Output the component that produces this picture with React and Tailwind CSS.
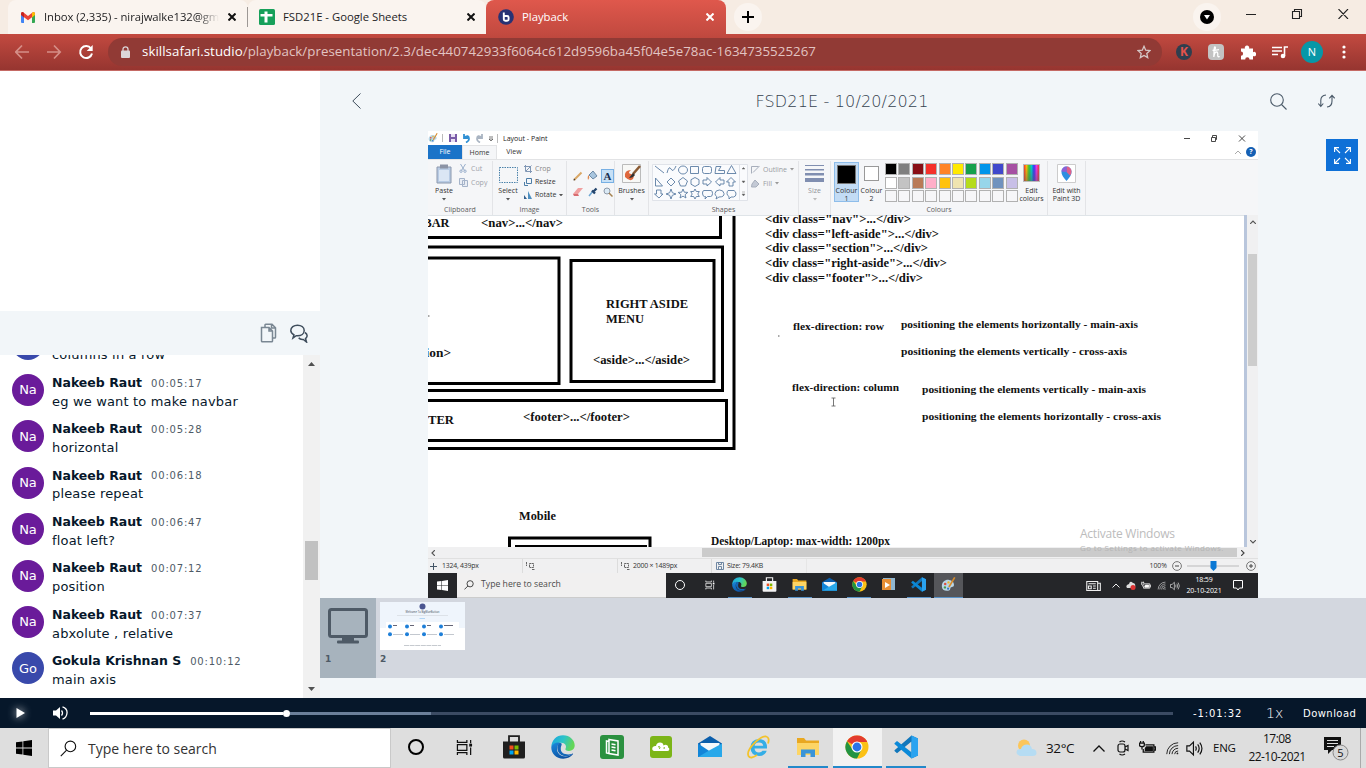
import React from "react";

const sans = "font-['Open_Sans','Noto_Sans',sans-serif]";
const verdana = "font-['DejaVu_Sans',sans-serif]";

const X = ({ c = "#111", s = 8, w = 2 }) => (
  <svg width={s} height={s} viewBox="0 0 8 8" className="shrink-0">
    <path d="M0.5 0.5L7.5 7.5M7.5 0.5L0.5 7.5" stroke={c} strokeWidth={w} />
  </svg>
);

const Edge = ({ s = 24 }) => (
  <svg width={s} height={s} viewBox="0 0 24 24">
    <defs>
      <linearGradient id="edgeTop" x1="0" y1="0" x2="1" y2="0.3">
        <stop offset="0" stopColor="#1ba5e0" /><stop offset="0.55" stopColor="#2cc3c8" /><stop offset="1" stopColor="#63d657" />
      </linearGradient>
      <linearGradient id="edgeLow" x1="0" y1="0" x2="0.6" y2="1">
        <stop offset="0" stopColor="#1a8ade" /><stop offset="1" stopColor="#0c4fa0" />
      </linearGradient>
    </defs>
    <path d="M0.3 12C0.6 5 5.5 0.3 12 0.3c7 0 11.7 5 11.7 10 0 3.600-2.700 5.700-5.700 5.700-2.600 0-4.200-1-3.500-2.200 1.500-2.600-.2-6-4.500-6-4.500 0-8.600 2-9.700 4.200z" fill="url(#edgeTop)" />
    <path d="M0.3 12c1-3.200 5-5 8.500-4.300C6.800 9.500 6 11.500 6 14c0 4.500 4 7.500 8.500 7.500 2.500 0 5.500-1.300 6.800-2.800.6-.6 1 0 .6.600C20 22 16.500 23.700 12.200 23.700 5.200 23.700 0 18.500.3 12z" fill="url(#edgeLow)" />
    <path d="M8.800 7.700C5 9.500 5 19 13 21c3.500.8 7-.5 8.300-2.300-4 1.500-12.300 1-11.500-6 .2-1.800 1.200-2.600.8-4.300z" fill="#1567b8" />
  </svg>
);

const Chrome = ({ s = 24 }) => (
  <svg width={s} height={s} viewBox="0 0 24 24">
    <circle cx="12" cy="12" r="11.500" fill="#fbc116" />
    <path d="M12 12L2 6.200A11.500 11.500 0 0 1 22 6.200L22 7H12z" fill="#e33b2e" />
    <path d="M2 6.200A11.500 11.500 0 0 0 12 23.500L16.500 14.500 7.500 14.500z" fill="#229342" />
    <circle cx="12" cy="12" r="5.500" fill="#fff" />
    <circle cx="12" cy="12" r="4.400" fill="#2a74e8" />
  </svg>
);

const VSCode = ({ s = 24 }) => (
  <svg width={s} height={s} viewBox="0 0 24 24">
    <path d="M17.500 0.500L24 3.500V20.500L17.500 23.500L17.500 6.500L3 18.200L0.500 16V15.200z" fill="#1177bb" />
    <path d="M0.500 8.200L3 6L17.500 17.200V23.500L0.500 9z" fill="#0a89d8" />
    <path d="M17.500 0.500L24 3.500V20.500L17.500 23.500z" fill="#2aa3f0" />
  </svg>
);

const Folder = ({ s = 24 }) => (
  <svg width={s} height={s} viewBox="0 0 24 24">
    <path d="M1 3h7l2 2.500h13V20H1z" fill="#e9a820" />
    <path d="M1 8h22v12H1z" fill="#fdd565" />
    <path d="M5 22v-7.500h14V22h-4.500v-3.500h-5V22z" fill="#3a94d8" />
  </svg>
);

const Mail = ({ s = 24 }) => (
  <svg width={s} height={s} viewBox="0 0 24 24">
    <path d="M0 8.500L12 1l12 7.500V22H0z" fill="#0b5eab" />
    <path d="M2.500 8h19v7L12 19 2.500 15z" fill="#f4f8fb" />
    <path d="M0 8.500L12 16.500 0 22z" fill="#1285d8" />
    <path d="M24 8.500V22H0L12 15z" fill="#28a8ea" />
  </svg>
);

const Store = ({ s = 24, bag = "#1f1f1f" }) => (
  <svg width={s} height={s} viewBox="0 0 24 24">
    <path d="M7 8V1.200h10V8" fill="none" stroke={bag} strokeWidth="1.800" />
    <path d="M1 6.500h22V22q0 1.500-1.500 1.500h-19Q1 23.500 1 22z" fill={bag} />
    <path d="M7.500 10.500h4v4h-4z" fill="#f04e1f" /><path d="M12.500 10.500h4v4h-4z" fill="#7fba00" />
    <path d="M7.500 15.500h4v4h-4z" fill="#00a4ef" /><path d="M12.500 15.500h4v4h-4z" fill="#ffb900" />
  </svg>
);

const Windows = ({ s = 16, c = "#000" }) => (
  <svg width={s} height={s} viewBox="0 0 16 16">
    <path d="M0 2.300L6.500 1.400V7.500H0zM7.300 1.300L16 0V7.500H7.300zM0 8.400H6.500V14.600L0 13.700zM7.300 8.400H16V16L7.300 14.700z" fill={c} />
  </svg>
);

const Search = ({ s = 18, c = "#111", w = 1.200 }) => (
  <svg width={s} height={s} viewBox="0 0 18 18" fill="none" stroke={c} strokeWidth={w}>
    <circle cx="11" cy="6.800" r="5.600" /><path d="M7 10.800L0.800 17" />
  </svg>
);

const TaskView = ({ s = 18, c = "#111" }) => (
  <svg width={s} height={s} viewBox="0 0 18 18" fill="none" stroke={c} strokeWidth="1.300">
    <path d="M1.500 1v2.500h10V1M1.500 17v-2.500h10V17M1.500 6h10v6h-10zM15.500 1v3.500M15.500 9v8" />
    <path d="M14 5h3v3h-3z" fill={c} stroke="none" />
  </svg>
);

const Wifi = ({ s = 16, c = "#222" }) => (
  <svg width={s} height={s} viewBox="0 0 16 16" fill="none" stroke={c} strokeWidth="1.100">
    <path d="M2 15A13 13 0 0 1 15 2M5 15A10 10 0 0 1 15 5.200M8 15A7 7 0 0 1 15 8.300M11 15a4 4 0 0 1 4-3.600" />
    <circle cx="14.200" cy="14.200" r="1" fill={c} stroke="none" />
  </svg>
);

const Speaker = ({ s = 16, c = "#111" }) => (
  <svg width={s} height={s} viewBox="0 0 16 16" fill="none" stroke={c} strokeWidth="1.100">
    <path d="M0.800 5.500h2.500L7 2v12l-3.700-3.500H0.800z" />
    <path d="M9 6q1.300 2 0 4M11 4.200q2.800 3.800 0 7.600M13 2.500q4 5.500 0 11" />
  </svg>
);

const Battery = ({ w = 16, c = "#111" }) => (
  <svg width={w} height={w} viewBox="0 0 16 16" fill="none" stroke={c} strokeWidth="1.200">
    <path d="M6 4.500h8v7H4V8.500M14.500 6.500h1v3h-1" /><path d="M7 6.500h5.500v3.500H6V8z" fill={c} />
    <path d="M1.500 1v2M4 1v2M0.500 3h4.500v2q0 1.300-2.200 1.300T0.500 5zM2.800 6.500V9" />
  </svg>
);

const Palette = ({ s = 18 }) => (
  <svg width={s} height={s} viewBox="0 0 18 18">
    <path d="M1 11c0-5 4-8 8.500-7.500 4 .5 6.500 3 6 6.500-.4 2.600-3 1.500-4 3-.8 1.500.2 3-3 3.500C4 17 1 15 1 11z" fill="#b9d6e8" />
    <circle cx="5" cy="8.500" r="1.500" fill="#e0503c" /><circle cx="9" cy="6.500" r="1.400" fill="#efb62c" />
    <circle cx="4.700" cy="12.500" r="1.400" fill="#4c9a4c" /><circle cx="8.500" cy="14" r="1.300" fill="#3678c4" />
    <path d="M16.500 0.500L9.500 12" stroke="#d88b2a" strokeWidth="2" />
  </svg>
);

function TabStrip() {
  return (
    <div className={`flex h-[34px] shrink-0 bg-[#f6ece3] ${sans} text-[11.300px] text-[#1d1d1f]`}>
      <div className="w-2" />
      <div className="flex w-[240px] items-center rounded-t-lg bg-[#faf4ef] pl-[13px]">
        <svg width="14" height="11" viewBox="0 0 14 11">
          <path d="M0 1.500V10q0 1 1 1h2V4.500z" fill="#4285f4" /><path d="M14 1.500V10q0 1-1 1h-2V4.500z" fill="#34a853" />
          <path d="M0 1.500Q.8-.6 2.500.400L7 4l4.500-3.600Q13.200-.6 14 1.500L11 5.200 7 8.200 3 5.200z" fill="#ea4335" />
          <path d="M11 1l.5-.6Q13.200-.6 14 1.500V3l-3 2.400z" fill="#fbbc04" /><path d="M0 1.500Q.8-.6 2.500.400L3 1v4.400L0 3z" fill="#c5221f" />
        </svg>
        <div className="ml-[9px] w-[175px] overflow-hidden whitespace-nowrap tracking-[-0.006em] [mask-image:linear-gradient(to_right,black_88%,transparent)]">Inbox (2,335) - nirajwalke132@gmail.com</div>
        <div className="ml-[9px]"><X /></div>
      </div>
      <div className="flex w-[238px] items-center rounded-t-lg bg-[#faf4ef]">
        <div className="-ml-px h-5 w-px bg-[#9d9895]" />
        <svg className="ml-[11px]" width="16" height="16" viewBox="0 0 16 16">
          <rect width="16" height="16" rx="1.500" fill="#17a05a" /><path d="M1.500 5H5.500V2.500H8.500V5H13.500V7.500H8.500V13.500H5.500V7.500H1.500z" fill="#fff" />
        </svg>
        <div className="ml-[8px] w-[184px]">FSD21E - Google Sheets</div>
        <X />
      </div>
      <div className="flex w-[240px] items-center rounded-t-lg bg-gradient-to-b from-[#df584c] to-[#c34a40] pl-[12px] text-white">
        <svg width="16" height="16" viewBox="0 0 16 16">
          <circle cx="8" cy="8" r="7.800" fill="#283274" />
          <path d="M5.800 3.500v6.700q0 1.500 1.500 1.500h1.800q1.500 0 1.500-1.500V8.500Q10.600 7 9.100 7H6" fill="none" stroke="#fff" strokeWidth="1.900" />
        </svg>
        <div className="ml-[8px] w-[184px]">Playback</div>
        <X c="#fff" />
      </div>
      <div className="ml-[8px] mt-[3px] grid h-7 w-7 place-items-center rounded-full bg-[#faf4ef]">
        <svg width="12" height="12" viewBox="0 0 12 12"><path d="M6 0V12M0 6H12" stroke="#000" strokeWidth="2" /></svg>
      </div>
      <div className="flex-1" />
      <div className="mt-[3px] grid h-7 w-7 place-items-center rounded-full bg-[#faf4ef]">
        <svg width="14" height="14" viewBox="0 0 14 14"><circle cx="7" cy="7" r="7" fill="#000" /><path d="M4 5h6L7 9.500z" fill="#fff" /></svg>
      </div>
      <svg className="ml-[25px] mt-[9px]" width="104" height="10" viewBox="0 0 104 10" fill="none" stroke="#222" strokeWidth="1.100">
        <path d="M0 5.500H10M46.500 2.500h7v7h-7zM48.500 2.500V.500h7v7h-2M92.500 0l9.500 10M102 0l-9.500 10" />
      </svg>
      <div className="w-[16px]" />
    </div>
  );
}

function Toolbar() {
  return (
    <div className={`flex h-[37px] shrink-0 items-center border-b border-[#c56a65] bg-gradient-to-b from-[#c34a40] to-[#963530] ${sans}`}>
      <svg className="ml-[15px] shrink-0" width="79" height="16" viewBox="0 0 79 16" fill="none">
        <path d="M14 8H1M7 1.500L.800 8 7 14.500" stroke="#d58f88" strokeWidth="1.700" />
        <path d="M32 8H45M39 1.500L45.200 8 39 14.500" stroke="#d58f88" strokeWidth="1.700" />
        <path d="M76 4.500A6 6 0 1 0 77 9.500" stroke="#fff" strokeWidth="2" /><path d="M77.700 1v6h-6z" fill="#fff" />
      </svg>
      <div className="ml-[14px] flex h-7 w-[1054px] items-center rounded-full bg-[#913a35]">
        <svg className="ml-[13px]" width="9" height="12" viewBox="0 0 9 12">
          <path d="M2 5V3.300a2.500 2.500 0 0 1 5 0V5" fill="none" stroke="#dcd6d8" strokeWidth="1.300" /><rect y="4.500" width="9" height="7.500" rx="1" fill="#dcd6d8" />
        </svg>
        <div className="ml-[12px] w-[995px] whitespace-nowrap text-[13.300px] tracking-[0.003em] text-[#e2c4c2]"><span className="text-white">skillsafari.studio</span>/playback/presentation/2.3/dec440742933f6064c612d9596ba45f04e5e78ac-1634735525267</div>
        <svg width="14" height="14" viewBox="0 0 14 14"><path d="M7 1.300l1.700 3.900 4.300.4-3.200 2.800.9 4.200L7 10.400l-3.700 2.200.9-4.200L1 5.600l4.300-.4z" fill="none" stroke="#d5c7c6" strokeWidth="1.300" /></svg>
      </div>
      <div className="ml-[14px] grid h-4 w-4 place-items-center rounded-full bg-[#2f3e4e] text-[12px] font-bold leading-none text-[#e4534b]">K</div>
      <div className="ml-4 grid h-4 w-4 place-items-center rounded-sm bg-[#c3c3c3]">
        <svg width="10" height="12" viewBox="0 0 10 12"><path d="M1.500 4.500Q5 3.500 4.300 1.200 3.300 .3 3.200 3.500L2.800 11Q3.500 6 5.500 6q1.700 0 1.200 3.500 0 1.800 2 1M2 4.600l6-1" fill="none" stroke="#fff" strokeWidth="1.300" /></svg>
      </div>
      <svg className="ml-4" width="16" height="15" viewBox="0 0 16 15"><path d="M1 3.500H5A2.200 2.200 0 1 1 9 3.500H13V7.200A2.200 2.200 0 1 1 13 11V14.500H9.500A2.100 2.100 0 0 0 5.200 14.500H1V10.800A2.100 2.100 0 0 0 1 6.600z" fill="#fff" /></svg>
      <svg className="ml-[16px]" width="17" height="13" viewBox="0 0 17 13"><path d="M0 1.500h10M0 5h10M0 8.500h6" stroke="#fff" strokeWidth="1.600" /><path d="M12.500 10V1H16" fill="none" stroke="#fff" strokeWidth="1.600" /><circle cx="11" cy="10" r="2.300" fill="#fff" /></svg>
      <div className="ml-[12px] grid h-[22px] w-[22px] place-items-center rounded-full bg-[#0797a7] text-[11px] text-white">N</div>
      <svg className="ml-[19px]" width="4" height="14" viewBox="0 0 4 14" fill="#fff"><circle cx="2" cy="2" r="1.600" /><circle cx="2" cy="7" r="1.600" /><circle cx="2" cy="12" r="1.600" /></svg>
    </div>
  );
}

const messages = [
  ["Go", "Gokula Krishnan S", "00:05:02", "columns in a row"],
  ["Na", "Nakeeb Raut", "00:05:17", "eg we want to make navbar"],
  ["Na", "Nakeeb Raut", "00:05:28", "horizontal"],
  ["Na", "Nakeeb Raut", "00:06:18", "please repeat"],
  ["Na", "Nakeeb Raut", "00:06:47", "float left?"],
  ["Na", "Nakeeb Raut", "00:07:12", "position"],
  ["Na", "Nakeeb Raut", "00:07:37", "abxolute , relative"],
  ["Go", "Gokula Krishnan S", "00:10:12", "main axis"],
];

function Sidebar() {
  return (
    <div className={`flex w-[320px] shrink-0 flex-col bg-white ${verdana} text-[#06172a]`}>
      <div className="h-[240px] shrink-0" />
      <div className="flex h-[44px] shrink-0 items-center bg-[#f2f6f9]">
        <svg className="ml-[260px]" width="18" height="20" viewBox="0 0 18 20" fill="none" stroke="#7a8793" strokeWidth="1.500">
          <path d="M1.500 4.500h7.500l3.500 3.500v10q0 .8-.8.8H2.300q-.8 0-.8-.8zM9 4.500V8h3.500" /><path d="M5 4V2q0-.7.700-.7H12l3.500 3.500V14.200q0 .8-.8.800H13M11.500 1.300V5h4" />
        </svg>
        <svg className="ml-[12px]" width="18" height="19" viewBox="0 0 18 19" fill="none" stroke="#3f4d5c" strokeWidth="1.500">
          <path d="M3 14l1-3.200Q.8 9 .8 6.500C.8 3.300 3.800 1.200 7.500 1.200s6.700 2.100 6.700 5.300-3 5.300-6.700 5.300L6.200 11.700z" />
          <path d="M15 8.500q2.500 1.500 2 3.800-.3 1.500-1.500 2.200L16.500 18l-3.200-2.500q-3 .5-4.600-1.700" />
        </svg>
      </div>
      <div className="flex min-h-0 flex-1">
        <div className="min-w-0 flex-1 overflow-hidden">
          <div className="-mt-[27.300px]">
            {messages.map(([who, name, time, text], i) => (
              <div key={i} className="flex h-[46.400px] pl-3">
                <div className={`grid h-8 w-8 shrink-0 place-items-center rounded-full text-[13px] text-white ${who === "Na" ? "bg-[#6a1b9a]" : "bg-[#3949ab]"}`}>{who}</div>
                <div className="ml-2 whitespace-nowrap">
                  <div className="mt-px flex h-4 items-center text-[12.500px] font-bold">
                    {name}
                    <span className="ml-[9px] text-[10px] font-normal tracking-[0.08em] text-[#4e5a66]">{time}</span>
                  </div>
                  <div className="mt-[1.500px] text-[13px] leading-[18px] tracking-[0.013em]">{text}</div>
                </div>
              </div>
            ))}
          </div>
        </div>
        <div className="flex w-[17px] flex-col items-center bg-[#f1f1f1]">
          <svg className="mt-[7px]" width="7" height="4" viewBox="0 0 7 4"><path d="M0 4L3.500 0 7 4z" fill="#505050" /></svg>
          <div className="mt-[175px] h-[39px] w-[13px] bg-[#c1c1c1]" />
          <div className="flex-1" />
          <svg className="mb-[7px]" width="7" height="4" viewBox="0 0 7 4"><path d="M0 0L3.500 4 7 0z" fill="#505050" /></svg>
        </div>
      </div>
    </div>
  );
}

const palette = [
  ["bg-black", "bg-[#7f7f7f]", "bg-[#880e15]", "bg-[#f5302a]", "bg-[#ff8426]", "bg-[#ffe900]", "bg-[#16a04c]", "bg-[#0095ea]", "bg-[#3f48cc]", "bg-[#a650a3]"],
  ["bg-white", "bg-[#c3c3c3]", "bg-[#b97a57]", "bg-[#ffaec9]", "bg-[#ffc20e]", "bg-[#efe4b0]", "bg-[#b5db1c]", "bg-[#97d6ea]", "bg-[#7092be]", "bg-[#c8bfe7]"],
  Array(10).fill("bg-[#f6f6f8]"),
];

const Group = ({ w, label, children }) => (
  <div className={`flex h-full shrink-0 flex-col border-r border-[#e3e4e7] ${w}`}>
    <div className="flex h-[44px]">{children}</div>
    <div className="text-center text-[7px] leading-[11px] text-[#5c5c5c]">{label}</div>
  </div>
);

const Caret = ({ c = "#555" }) => <svg className="shrink-0" width="4" height="2.500" viewBox="0 0 5 3"><path d="M0 0h5L2.500 3z" fill={c} /></svg>;

function Ribbon() {
  return (
    <div className="flex h-[56px] border-t border-[#e2e3e5] bg-[#f5f6f8] pt-px text-[7px] leading-[8px] text-[#333]">
      <Group w="w-[65px]" label="Clipboard">
        <div className="ml-[7px] mt-[3px] flex w-[18px] flex-col items-center">
          <svg width="16" height="20" viewBox="0 0 16 20"><path d="M1 3h14v16H1z" fill="#b8cbe4" stroke="#8c98ad" /><path d="M4 .500h8v4H4z" fill="#8b93a5" /><path d="M3 6h10v11H3z" fill="#dbe6f4" /></svg>
          <div className="mb-[3px] mt-[3px]">Paste</div><Caret />
        </div>
        <div className="ml-[6px] mt-[3px] flex flex-col gap-[5px] text-[#a0a3aa]">
          <div className="flex items-center gap-[4px]"><svg width="8" height="9" viewBox="0 0 8 9" fill="none" stroke="#9bb0cc"><path d="M1.500 0L5.500 6.500M6.500 0L2.500 6.500" /><circle cx="2" cy="7.200" r="1.200" /><circle cx="6" cy="7.200" r="1.200" /></svg>Cut</div>
          <div className="flex items-center gap-[3px]"><svg width="9" height="9" viewBox="0 0 9 9" fill="#e9edf4" stroke="#a4b3c9"><path d="M.500.500h5v6h-5zM3.500 2.500h5v6h-5z" /></svg>Copy</div>
        </div>
      </Group>
      <Group w="w-[74px]" label="Image">
        <div className="ml-[5px] mt-[6px] flex w-[20px] flex-col items-center">
          <svg width="19" height="16" viewBox="0 0 19 16"><path d="M.500.500h18v15H.500z" fill="none" stroke="#4b83ab" strokeDasharray="1.500 1" /></svg>
          <div className="mb-[3px] mt-[4px]">Select</div><Caret />
        </div>
        <div className="ml-[6px] mt-[4px] flex flex-col gap-[5px] whitespace-nowrap">
          <div className="flex items-center gap-[3px] text-[#888]"><svg width="8" height="8" viewBox="0 0 8 8" fill="none" stroke="#8097b5"><path d="M1.500 0v6.500H8M0 1.500h6.500V8M2 6L7.500.500" /></svg>Crop</div>
          <div className="flex items-center gap-[3px]"><svg width="8" height="8" viewBox="0 0 8 8" fill="none" stroke="#4c7da7"><path d="M2.500.500h5v5h-5zM.500 4v3.500H4" /></svg>Resize</div>
          <div className="flex items-center gap-[3px]"><svg width="8" height="8" viewBox="0 0 8 8"><path d="M0 8V4l3 4z" fill="#335f8d" /><path d="M4 8V0l4 8z" fill="#4e8fc0" /></svg>Rotate <Caret /></div>
        </div>
      </Group>
      <Group w="w-[48px]" label="Tools">
        <div className="ml-[4px] mt-[7px] grid h-[30px] grid-cols-3 place-items-center gap-x-[2px] gap-y-[3px]">
          <svg width="10" height="10" viewBox="0 0 10 10"><path d="M1 9L8.500 1.500" stroke="#d9a766" strokeWidth="2" /><path d="M.500 9.500l.5-2L2.500 9z" fill="#333" /></svg>
          <svg width="11" height="11" viewBox="0 0 11 11"><path d="M2 5l4-4 4 5-4 3z" fill="#a9c6df" stroke="#6d8aa6" /><path d="M2 5q-2 1-1 5 2-2 1-4" fill="#e08a4f" /></svg>
          <div className="grid h-[14px] w-[13px] place-items-center border border-[#78b0e4] bg-[#c7e0f6] font-['Liberation_Serif',serif] text-[11px] font-bold text-[#1c2f50]">A</div>
          <svg width="10" height="8" viewBox="0 0 10 8"><path d="M0 6L5 0h5L5 6z" fill="#f0a0a0" /><path d="M0 6h5l1 2H1z" fill="#d86c70" /></svg>
          <svg width="10" height="10" viewBox="0 0 10 10"><path d="M1 9l4-5" stroke="#6ea6d2" strokeWidth="1.500" /><path d="M4 3.500l3 3M5.500 4.500L8.500 1.500" stroke="#24456d" strokeWidth="2.300" /></svg>
          <svg width="10" height="10" viewBox="0 0 10 10" fill="none"><circle cx="4" cy="4" r="3" fill="#dbeaf5" stroke="#8e9aaa" /><path d="M6 6l3.500 3.500" stroke="#a4814f" strokeWidth="1.500" /></svg>
        </div>
      </Group>
      <Group w="w-[34px]" label="">
        <div className="flex w-full flex-col items-center pt-[3px]">
          <svg width="19" height="19" viewBox="0 0 19 19"><path d="M.500.500h18v18H.500z" fill="#f8f8f6" stroke="#bbb" /><path d="M3 13q-1-7 6-7-4 3 0 4 4 1 2 5-3 3-8-2z" fill="#df673c" /><path d="M18 2l-7 8" stroke="#8a5a33" strokeWidth="2.500" /><path d="M11 9l-4 5q4 0 6-3z" fill="#333" /></svg>
          <div className="mb-[3px] mt-[4px]">Brushes</div><Caret />
        </div>
      </Group>
      <Group w="w-[150px]" label="Shapes">
        <svg className="ml-[3px] mt-[3px] shrink-0" width="96" height="37" viewBox="0 0 96 37" fill="none" stroke="#5b7da3" strokeWidth="0.900">
          <path d="M.500.500h95v36h-95z" fill="#fafbfd" stroke="#dde0e6" />
          <path d="M3 2l9 7M15 9q2-8 4-4t5-3" /><ellipse cx="31" cy="6" rx="4.500" ry="4" />
          <path d="M38.500 2.500h8v7h-8zM64 2.500h5L66.500 6.500h6v3h-9.500zM79.500 1.500l4.500 8h-9z" /><rect x="50.500" y="2.500" width="9" height="7" rx="2" />
          <path d="M3.500 14v8h7zM19 14l4 4-4 4-4-4zM31 13.500l4.500 3.500-2 5h-5l-2-5zM43 13.500l4 2.200v4.500l-4 2.300-4-2.300v-4.500zM51 16h4v-2.500l4.500 4.500-4.500 4V20h-4zM72 16h-4v-2.500L63.500 18l4.500 4V20h4zM77 22v-4h-2.500l4.500-4.500 4.500 4.500H81v4z" />
          <path d="M4.500 26v4H2.500L7 34l4-4H9v-4zM19 25l1.300 3.700L24 30l-3.700 1.300L19 35l-1.300-3.700L14 30l3.700-1.300zM31 25l1.300 3.200 3.500.2-2.700 2.300.9 3.300-3-1.900-3 1.900.9-3.300-2.700-2.300 3.500-.2zM43 25l1.300 2.500h3L45.800 30l1.500 2.500h-3L43 35l-1.300-2.500h-3l1.500-2.500-1.500-2.500h3z" />
          <path d="M52 26.500h7q1.500 0 1.500 3t-2 3h-3L53 35l.5-2.500h-1q-2 0-2-3.500 0-2.500 1.500-2.500z" /><path d="M64 35l.8-2.500q-2-1-1.800-3 .5-3.500 4.500-3.500t4.500 3.500-5 3.500zM76 26.500h6q2 1 2 3.500t-2.500 3H79L77 35v-2.500q-2-1-2-3t1-3z" />
          <path d="M87.500 1v35" stroke="#dde0e6" /><path d="M90 5h3L91.500 3.500zM90 17h3l-1.500 2zM90 28h3M90 30h3l-1.500 2z" fill="#555" stroke="#777" strokeWidth=".5" />
        </svg>
        <div className="ml-[3px] mt-[4px] flex flex-col gap-[5px] whitespace-nowrap text-[#999ca3]">
          <div className="flex items-center gap-[3px]"><svg width="9" height="9" viewBox="0 0 9 9" fill="none" stroke="#a7aebb"><path d="M.500 8.500v-7h7M2 7.500L8.500 1" /></svg>Outline <Caret c="#999" /></div>
          <div className="flex items-center gap-[3px]"><svg width="9" height="9" viewBox="0 0 9 9" fill="#c3c9d5" stroke="#a7aebb"><path d="M1 5l3-4 4 4-3 3H.500z" /></svg>Fill <Caret c="#999" /></div>
        </div>
      </Group>
      <Group w="w-[32px]" label="">
        <div className="flex w-full flex-col items-center pt-[3px] text-[#8f9299]">
          <svg width="19" height="18" viewBox="0 0 19 18" fill="#808eb0"><path d="M0 1h19v1H0zM0 5h19v1.500H0zM0 9h19v2.500H0zM0 14h19v4H0z" /></svg>
          <div className="mb-[3px] mt-[5px]">Size</div><Caret c="#bbb" />
        </div>
      </Group>
      <Group w="w-[217px]" label="Colours">
        <div className="ml-[3px] mt-px flex h-[40px] w-[25px] shrink-0 flex-col items-center border border-[#8ebdea] bg-[#c3dcf5] pt-[2px] text-center leading-[7.500px]">
          <div className="mb-[3px] h-[19px] w-[19px] shrink-0 border border-[#777] bg-black" />Colour<br />1
        </div>
        <div className="mt-px flex w-[25px] shrink-0 flex-col items-center pt-[4px] text-center leading-[7.500px]">
          <div className="mb-[6px] h-[15px] w-[15px] shrink-0 border border-[#999] bg-white" />Colour<br />2
        </div>
        <div className="ml-[1px] mt-[2px] flex flex-col gap-[1.500px]">
          {palette.map((row, i) => (
            <div key={i} className="flex gap-[1.400px]">
              {row.map((c, j) => <div key={j} className={`h-[12px] w-[12px] border border-[#b1b1b1] ${c}`} />)}
            </div>
          ))}
        </div>
        <div className="flex w-[28px] flex-col items-center pt-[3px] text-center leading-[7.500px]">
          <div className="mb-[5px] h-[18px] w-[17px] border border-[#bbb] bg-[linear-gradient(180deg,transparent,rgba(90,90,90,.5)),linear-gradient(90deg,#f33,#fb0,#3c3,#0cc,#33f,#e3e,#f33)]" />Edit<br />colours
        </div>
      </Group>
      <Group w="w-[38px]" label="">
        <div className="flex w-full flex-col items-center pt-[3px] text-center leading-[7.500px]">
          <svg className="mb-[4px] shrink-0" width="19" height="19" viewBox="0 0 19 19"><path d="M.500.500h18v18H.500z" fill="#fff" stroke="#ccc" /><path d="M9.500 17Q4 11 4.500 7.500A5 5 0 0 1 14.500 7.500Q15 11 9.500 17z" fill="#2f8fe0" /><path d="M9.500 2.500a5 5 0 0 1 5 5q0 2-1.500 4L9.500 8z" fill="#e0608a" /><path d="M4.500 7.500a5 5 0 0 1 5-5V8z" fill="#8d60d8" /></svg>
          <span className="whitespace-nowrap">Edit with</span>Paint 3D
        </div>
      </Group>
    </div>
  );
}

const canvasText = [
  [423.5, 227, 26, "BAR", 12.5], [481, 227, 82, "<nav>...</nav>", 12.5],
  [606, 308, 82, "RIGHT ASIDE", 12.5], [606, 323, 38, "MENU", 12.5], [593, 364, 97, "<aside>...</aside>", 12.5],
  [404, 357, 47, "section>", 12.5], [428, 424, 26, "TER", 12.5], [523, 420.5, 107, "<footer>...</footer>", 12.5],
  [765, 223, 146, '<div class="nav">...</div>', 12.5], [765, 237.5, 174, '<div class="left-aside">...</div>', 12.5],
  [765, 252, 163, '<div class="section">...</div>', 12.5], [765, 266.5, 182, '<div class="right-aside">...</div>', 12.5],
  [765, 281.5, 158, '<div class="footer">...</div>', 12.5],
  [793, 330, 91, "flex-direction: row", 11.2], [901, 328, 237, "positioning the elements horizontally - main-axis", 11.2],
  [901, 355, 226, "positioning the elements vertically - cross-axis", 11.2],
  [792, 390.5, 107, "flex-direction: column", 11.2], [922, 392.5, 224, "positioning the elements vertically - main-axis", 11.2],
  [922, 419.5, 239, "positioning the elements horizontally - cross-axis", 11.2],
  [519, 520, 37, "Mobile", 12], [711, 545, 179, "Desktop/Laptop: max-width: 1200px", 12],
];

function PaintCanvas() {
  return (
    <div className="flex h-[332px] bg-white">
      <svg width="816" height="332" viewBox="428 215 816 332" className="shrink-0">
        <g fill="none" stroke="#000" strokeWidth="3">
          <path d="M428 237.500H720.500V215M428 247H722.500V390.500H428M428 258H559V383.500H428M571 260.500H714V381.500H571zM428 400.500H726.500V440.500H428M734 215V448.500H428M509.500 547V538H650V547M515 546.500H647" />
        </g>
        <path d="M428 215.500H1244" stroke="#dfe4e8" />
        <path d="M427 316h2.500M778 336h1.500" stroke="#555" />
        <path d="M831.500 398h4M831.500 406h4M833.500 398v8" stroke="#555" strokeWidth=".8" />
        <g fontFamily="Liberation Serif, serif" fontWeight="700" fill="#111">
          {canvasText.map(([x, y, w, t, s], i) => <text key={i} x={x} y={y} textLength={w} lengthAdjust="spacingAndGlyphs" fontSize={s}>{t}</text>)}
        </g>
        <g fontFamily="Open Sans, sans-serif" fill="#bcbcbc">
          <text x="1080" y="538" fontSize="12" textLength="95">Activate Windows</text>
        </g>
      </svg>
      <div className="w-[3px] bg-[#b9c6dc]" />
      <div className="flex flex-1 flex-col items-center bg-[#f0f0f1] pt-[5px]">
        <svg width="6" height="4" viewBox="0 0 6 4"><path d="M0 4l3-3 3 3" fill="none" stroke="#555" strokeWidth="1.200" /></svg>
        <div className="mt-[30px] h-[112px] w-[9px] bg-[#cdcdcd]" />
        <div className="flex-1" />
        <svg className="mb-[3px]" width="6" height="4" viewBox="0 0 6 4"><path d="M0 0l3 3 3-3" fill="none" stroke="#555" strokeWidth="1.200" /></svg>
      </div>
    </div>
  );
}

const VCell = ({ children, on, active }) => (
  <div className={`flex h-full w-[29.800px] shrink-0 flex-col items-center ${active ? "bg-[#55565a]" : ""}`}>
    <div className="grid flex-1 place-items-center">{children}</div>
    <div className={`h-[1.500px] ${active ? "w-full" : "w-[24px]"} ${on ? "bg-[#5a93c8]" : ""}`} />
  </div>
);

const SizeIcon = () => <svg width="9" height="8" viewBox="0 0 9 8" fill="none" stroke="#666"><path d="M3.500 1.500h4v4h-4zM.500 0v4M6 7.500h3" strokeDasharray="2 .5" /></svg>;

function Video() {
  return (
    <div className={`ml-[108px] flex h-[467px] w-[830px] flex-col overflow-hidden bg-white ${sans}`}>
      <div className="flex h-[14px] items-center">
        <div className="w-[10px] overflow-hidden"><Palette s={10} /></div>
        <svg className="ml-[4px]" width="52" height="10" viewBox="0 0 52 10" fill="none">
          <path d="M.500 1v8" stroke="#bbb" /><path d="M7 1h8v8H7z" fill="#7a5ca8" /><path d="M9 1h4v3H9zM9 6h4v3H9z" fill="#e7def3" />
          <path d="M22 1v4h4M22 4.500Q27 1 27 6q0 2-3 3.500" stroke="#2f8fd3" strokeWidth="1.800" />
          <path d="M40 1v4h-4M40 4.500Q35 1 35 6q0 2 3 3.500" stroke="#a9b4c2" strokeWidth="1.800" />
          <path d="M47 4h4M47 6h4l-2 2z" stroke="#444" strokeWidth=".7" />
        </svg>
        <div className="ml-[3px] h-[9px] w-px bg-[#bbb]" />
        <div className="ml-[5px] w-[90px] text-[7px] leading-none text-[#222]">Layout - Paint</div>
        <div className="flex-1" />
        <svg className="mr-[12px]" width="62" height="7" viewBox="0 0 62 7" fill="none" stroke="#333"><path d="M0 3.500h6M27.500 2.500h4v4h-4zM28.500 2V.500h4v4H32M55 .500l6 6M61 .500l-6 6" strokeWidth=".9" /></svg>
      </div>
      <div className="flex h-[14px] items-center text-center text-[7px] leading-[14px] text-[#333]">
        <div className="h-full w-[34px] bg-[#1a73c8] text-white">File</div>
        <div className="h-full w-[35px] border-x border-t border-[#e2e3e5] bg-[#f5f6f8]">Home</div>
        <div className="w-[34px]">View</div>
        <div className="flex-1" />
        <svg width="6" height="4" viewBox="0 0 6 4"><path d="M0 4l3-3 3 3" fill="none" stroke="#aaa" /></svg>
        <div className="ml-[5px] mr-[2px] h-[10px] w-[10px] rounded-full bg-[#1560b4] text-[7px] font-bold leading-[10px] text-white">?</div>
      </div>
      <Ribbon />
      <div className="relative flex flex-col">
        <PaintCanvas />
        <div className="flex h-[11px] items-center bg-[#f0f0f1]">
          <svg className="ml-[3px]" width="4" height="6" viewBox="0 0 4 6"><path d="M4 0L1 3l3 3" fill="none" stroke="#555" strokeWidth="1.200" /></svg>
          <div className="ml-[267px] h-[9px] w-[535px] bg-[#cbcbcb]" />
          <svg className="ml-[4px]" width="4" height="6" viewBox="0 0 4 6"><path d="M0 0l3 3-3 3" fill="none" stroke="#444" strokeWidth="1.200" /></svg>
        </div>
        <div className="absolute left-[652px] top-[327px] whitespace-nowrap text-[8px] leading-[11px] tracking-[0.045em] text-[#b5b5b5]">Go to Settings to activate Windows.</div>
      </div>
      <div className="flex h-[15px] items-center whitespace-nowrap border-t border-[#e0e0e0] bg-[#f0f0f1] text-[6.900px] text-[#333]">
        <div className="flex h-full w-[95px] items-center gap-[5px] border-r border-[#dcdcdc] pl-[2px]"><svg width="7" height="7" viewBox="0 0 7 7"><path d="M3.500 0v7M0 3.500h7" stroke="#456" /></svg><span className="tracking-[-0.03em]">1324, 439px</span></div>
        <div className="flex h-full w-[95px] items-center border-r border-[#dcdcdc] pl-[3px]"><SizeIcon /></div>
        <div className="flex h-full w-[94px] items-center gap-[3px] border-r border-[#dcdcdc] pl-[3px]"><SizeIcon /><span className="tracking-[-0.03em]">2000 × 1489px</span></div>
        <div className="flex h-full w-[95px] items-center gap-[3px] border-r border-[#e6e6e6] pl-[4px]"><svg width="8" height="8" viewBox="0 0 8 8" fill="none" stroke="#6f87a3"><path d="M.500.500h7v7h-7zM2.500.500v2h3v-2M2.500 7.500v-3h3v3" /></svg><span className="tracking-[-0.03em]">Size: 79.4KB</span></div>
        <div className="flex-1" />
        <div className="mr-[5px]">100%</div>
        <svg width="86" height="12" viewBox="0 0 86 12" fill="none"><circle cx="5" cy="6" r="4.400" stroke="#777" /><path d="M3 6h4" stroke="#444" /><path d="M15 6h52" stroke="#ccc" strokeWidth="1.500" /><path d="M38.500 1h6v7l-3 3-3-3z" fill="#0b78d4" /><circle cx="79" cy="6" r="4.400" stroke="#777" /><path d="M77 6h4M79 4v4" stroke="#444" /></svg>
      </div>
      <div className="flex h-[25px] shrink-0 items-center bg-[#252629] text-white">
        <div className="grid w-[29px] place-items-center"><Windows s={11} c="#fff" /></div>
        <div className="flex h-full w-[208.500px] items-center border-b border-[#ccc] bg-[#f1f0f0] pl-[7px] text-[8.700px] text-[#4b4b4b]"><Search s={10} c="#333" w={1.6} /><span className="ml-[7px]">Type here to search</span></div>
        <VCell><div className="h-[10px] w-[10px] rounded-full border-[1.500px] border-white" /></VCell>
        <VCell><TaskView s={10} c="#fff" /></VCell>
        <VCell on><Edge s={15} /></VCell>
        <VCell><Store s={15} bag="#f3f3f3" /></VCell>
        <VCell on><Folder s={15} /></VCell>
        <VCell><Mail s={15} /></VCell>
        <VCell on><Chrome s={15} /></VCell>
        <VCell><svg width="13" height="13" viewBox="0 0 13 13"><path d="M1 0h12v12H1z" fill="#90b6cf" /><path d="M0 1h9v11H0z" fill="#e88f35" /><path d="M3 4l5 3-5 3z" fill="#fff" /></svg></VCell>
        <VCell on><VSCode s={15} /></VCell>
        <VCell on active><Palette s={15} /></VCell>
        <div className="flex-1" />
        <svg width="15" height="10" viewBox="0 0 16 11" fill="none" stroke="#eee" strokeWidth="1.200"><path d="M.600.600h12v9.800h-12zM12.500 2.500h3v8h-3M2.500 3h8M2.500 5.500h3v3h-3zM7.500 5.500h3M7.500 8h3" /></svg>
        <svg className="ml-[11px]" width="8" height="5" viewBox="0 0 7 5" fill="none" stroke="#eee"><path d="M0 4.500L3.500 1 7 4.500" /></svg>
        <svg className="ml-[6px]" width="10" height="9" viewBox="0 0 10 9"><path d="M1 7Q-1 4 3 3q1-4 4-1 3 0 2 5z" fill="#ddd" /><circle cx="7" cy="6.500" r="2.500" fill="#d33" /></svg>
        <span className="ml-[5px]"><Battery w={10} c="#fff" /></span>
        <span className="ml-[6px]"><Wifi s={9} c="#ddd" /></span>
        <span className="ml-[4px]"><Speaker s={10} c="#ddd" /></span>
        <div className="ml-[6px] w-[36px] whitespace-nowrap text-center text-[7px] leading-[10.500px] tracking-[-0.02em]">18:59<br />20-10-2021</div>
        <svg className="ml-[11px] mr-[15px]" width="10" height="11" viewBox="0 0 10 11" fill="none" stroke="#fff"><path d="M.500.500h9v7.500H6.500L5 10 3.500 8h-3z" /></svg>
      </div>
    </div>
  );
}

function Slides() {
  return (
    <div className={`flex h-[80px] shrink-0 bg-[#d3d7df] ${verdana} text-[9px] font-bold text-[#4e5a66]`}>
      <div className="w-[56px] bg-[#a7b3bd] pt-[10px]">
        <svg className="ml-[8px]" width="40" height="36" viewBox="0 0 40 36"><rect x="1.500" y="1.500" width="37" height="27" rx="2" fill="none" stroke="#4e5a66" strokeWidth="3" /><path d="M14 30h12v3h-12z" fill="#4e5a66" /><rect x="9" y="32.500" width="22" height="3" rx="1" fill="#4e5a66" /></svg>
        <div className="ml-[5px] mt-[10px] leading-[11px]">1</div>
      </div>
      <div className="pl-[4px] pt-[4px]">
        <svg width="85" height="48" viewBox="0 0 85 48">
          <path d="M0 0h85v48H0z" fill="#fff" /><path d="M0 0h85v26H0z" fill="#eff5fc" /><path d="M6 20h73v17H6z" fill="#fff" />
          <circle cx="42.500" cy="4.500" r="3" fill="#4a5590" />
          <text x="25.500" y="11" fontSize="3.500" textLength="34" lengthAdjust="spacingAndGlyphs" fontWeight="600" fontFamily="Open Sans, sans-serif" fill="#6b7480">Welcome To BigBlueButton</text>
          <path d="M17 13.500h51" stroke="#dde2e8" /><path d="M39.500 16.500h5.500" stroke="#a4cef2" strokeWidth=".8" />
          {[10, 27, 44, 61].map((x) => (
            <g key={x}><circle cx={x} cy="24.500" r="2" fill="#1e7fd8" /><circle cx={x} cy="32.300" r="2" fill="#1e7fd8" /><path d={`M${x + 3} 23.500h${x === 61 ? 9 : 4}`} stroke="#667" /><path d={`M${x + 3} 32.500h10`} stroke="#c3c8cf" /></g>
          ))}
          <path d="M24 43.500h37" stroke="#c6cacf" strokeDasharray="5 .6" />
        </svg>
        <div className="mt-[4px] leading-[11px]">2</div>
      </div>
    </div>
  );
}

function Stage() {
  return (
    <div className="flex min-w-0 flex-1 flex-col bg-[#f2f6f9]">
      <div className="flex h-[60px] shrink-0 items-center text-[#4b5a69]">
        <svg className="ml-[32px]" width="9" height="16" viewBox="0 0 9 16"><path d="M8.500 0.500L.800 8l7.700 7.500" fill="none" stroke="#3f4d5c" /></svg>
        <div className={`ml-[362px] w-[238px] pt-px text-center ${verdana}`}>
          <div className="text-[16px] font-extralight tracking-[0.01em] text-[#35424f]">FSD21E - 10/20/2021</div>
        </div>
        <div className="flex-1" />
        <svg width="17" height="17" viewBox="0 0 17 17" fill="none" stroke="#4b5a69" strokeWidth="1.100"><circle cx="7" cy="7" r="6.300" /><path d="M11.500 11.500L16.500 16.500" /></svg>
        <svg className="ml-[31px] mr-[31px]" width="17" height="14" viewBox="0 0 17 14" fill="none" stroke="#4b5a69" strokeWidth="1.100"><path d="M8 1Q2.500 1.500 2.800 7v5M.300 9.500L2.800 12.500 5.300 9.500M9 13q5-.5 5-6V1.500M11.300 4.300l2.700-3 2.700 3" /></svg>
      </div>
      <div className="flex h-[467px] shrink-0 items-start">
        <Video />
        <div className="ml-[68px] mt-[8px] grid h-8 w-8 place-items-center bg-[#0f70d7]">
          <svg width="17" height="17" viewBox="0 0 17 17" fill="none" stroke="#fff" strokeWidth="1.100"><path d="M.600 5V.600H5M12 .600h4.400V5M16.400 12v4.400H12M5 16.400H.600V12M.600.600l5.400 5.400M16.400.600l-5.400 5.400M16.400 16.400l-5.400-5.400M.600 16.400l5.400-5.400" /></svg>
        </div>
      </div>
      <Slides />
    </div>
  );
}

function Player() {
  return (
    <div className={`flex h-[30px] shrink-0 items-center bg-[#06172a] ${verdana} text-[10px] text-white`}>
      <svg className="ml-[16px] drop-shadow-[0_0_4px_rgba(255,255,255,0.9)]" width="9" height="10" viewBox="0 0 9 10"><path d="M.500 0L9 5 .500 10z" fill="#fff" /></svg>
      <svg className="ml-[28px]" width="15" height="14" viewBox="0 0 15 14" fill="none" stroke="#fff" strokeWidth="1.300"><path d="M0 4.500h3L7 1v12L3 9.500H0z" fill="#fff" stroke="none" /><path d="M8.500 4.500q2 2.500 0 5M9.500 .800q5 1.700 4.500 6.200-.3 4.500-4.500 6.200" /></svg>
      <div className="ml-[22px] flex w-[1083px] items-center">
        <div className="h-[3px] w-[193px] bg-white" /><div className="h-[7px] w-[7px] rounded-full bg-white" />
        <div className="h-[3px] w-[141px] bg-[#6b7f99]" /><div className="h-[3px] flex-1 bg-[#3b4b63]" />
      </div>
      <div className="ml-[20px] w-[52px] whitespace-nowrap tracking-[0.09em]">-1:01:32</div>
      <div className="ml-[21px] w-[20px] text-[14px] font-extralight">1x</div>
      <div className="ml-[17px] whitespace-nowrap tracking-[0.045em]">Download</div>
    </div>
  );
}

const Cell = ({ children, on, active }) => (
  <div className={`flex h-full w-[49.100px] shrink-0 flex-col items-center ${active ? "bg-[#f2f2f2]" : ""}`}>
    <div className="grid flex-1 place-items-center">{children}</div>
    <div className={`h-[2px] ${active ? "w-full" : "w-[40px]"} ${on || active ? "bg-[#2389ca]" : ""}`} />
  </div>
);

function Taskbar() {
  return (
    <div className={`flex h-[40px] shrink-0 items-center bg-[#dedede] ${sans} text-[#111]`}>
      <div className="grid w-[48px] place-items-center"><Windows /></div>
      <div className="flex h-full w-[343px] items-center border border-[#c9c9c9] bg-white pl-[11px] text-[14px] text-[#333]"><Search s={17} /><span className="ml-[11px]">Type here to search</span></div>
      <Cell><div className="h-4 w-4 rounded-full border-2 border-black" /></Cell>
      <Cell><TaskView s={17} /></Cell>
      <Cell><Store /></Cell>
      <Cell><Edge /></Cell>
      <Cell><svg width="24" height="24" viewBox="0 0 24 24"><rect width="24" height="24" rx="3" fill="#2b9140" /><path d="M9 4.500L18 6V20L9 18.500z M9 6.500L6.500 6V18l2.500.5M11.500 9l4 .7M11.500 12l4 .7M11.500 15l4 .7" fill="none" stroke="#fff" strokeWidth="1.500" /></svg></Cell>
      <Cell><svg width="24" height="24" viewBox="0 0 24 24"><rect x="1" y="1" width="22" height="22" rx="3" fill="#7cb518" /><path d="M5 16q-2.500-1-1.500-3.500Q4.500 10.500 7 11q.5-3.500 4-3.500 3.200 0 3.500 3 2-1.500 4 0 .8.800.6 2 1.500.6 1.200 2-.4 1.500-2 1.500z" fill="#fff" /><path d="M9 12q1.500-1 2 .2t-1 1.300M15 12q1 1.200-.3 2" fill="none" stroke="#7cb518" /></svg></Cell>
      <Cell><Mail /></Cell>
      <Cell><svg width="24" height="24" viewBox="0 0 24 24"><path d="M20 13.500H7.500Q8 17.500 12 17.500q2.500 0 3.500-1.700h4.200Q18 21 12 21 3.500 20.500 3.500 12.500T12 4q8.500.5 8 9.500zM7.600 10.700h8.600Q15.700 7.500 12 7.500t-4.400 3.200z" fill="#35aee6" /><path d="M21 8.500q2-6-2-7Q15 1 9 6.500-1 16 1.500 21q2 3.500 8.500-1" fill="none" stroke="#f3c32c" strokeWidth="1.800" /></svg></Cell>
      <Cell on><Folder /></Cell>
      <Cell active><Chrome /></Cell>
      <Cell on><VSCode /></Cell>
      <div className="flex-1" />
      <svg width="22" height="18" viewBox="0 0 22 18"><circle cx="9" cy="6.500" r="6" fill="#fbc65a" /><path d="M4 16.500Q.500 15 2 11.500 3 9.500 6 10q1-4.500 6-4.500 4 0 5 4.500 4.500 0 4.500 4 0 3-4 3H5z" fill="#b5dcf3" /></svg>
      <div className="ml-[9px] w-[47px] whitespace-nowrap text-[13.500px] tracking-[-0.03em]">32°C</div>
      <svg width="12" height="7" viewBox="0 0 12 7" fill="none" stroke="#111" strokeWidth="1.300"><path d="M.500 6.500L6 1l5.500 5.500" /></svg>
      <svg className="ml-[12px]" width="12" height="16" viewBox="0 0 12 16" fill="none" stroke="#111" strokeWidth="1.200"><rect x="1" y="4" width="7" height="8" rx="2" /><path d="M8 7l3-1.500v5L8 9M2.500 2Q5 0 8 2M2.500 14Q5 16 8 14" /></svg>
      <span className="ml-[10px]"><Battery w={17} /></span>
      <span className="ml-[9px]"><Wifi s={14} /></span>
      <span className="ml-[7px]"><Speaker s={17} /></span>
      <div className="ml-[10px] w-[24px] whitespace-nowrap text-[11.500px] tracking-[-0.02em]">ENG</div>
      <div className="ml-[8px] w-[64px] whitespace-nowrap text-center text-[12px] leading-[18px] tracking-[-0.045em]">17:08<br />22-10-2021</div>
      <svg className="ml-[15px]" width="25" height="25" viewBox="0 0 25 25"><path d="M0 1h17v13H8l-4 4v-4H0z" fill="#111" /><path d="M3 4.500h11M3 7.500h11M3 10.500h7" stroke="#ddd" /><circle cx="16.500" cy="16.500" r="7.500" fill="#d8d8d8" stroke="#888" /><text x="16.500" y="20.500" fontSize="11" textAnchor="middle" fontFamily="Open Sans, sans-serif" fill="#111">5</text></svg>
      <div className="ml-[11px] h-full w-px bg-[#aaa]" />
      <div className="w-[5px]" />
    </div>
  );
}

export default function App() {
  return (
    <div className="flex h-[768px] w-[1366px] flex-col overflow-hidden bg-white">
      <TabStrip />
      <Toolbar />
      <div className="flex h-[627px] shrink-0">
        <Sidebar />
        <Stage />
      </div>
      <Player />
      <Taskbar />
    </div>
  );
}
